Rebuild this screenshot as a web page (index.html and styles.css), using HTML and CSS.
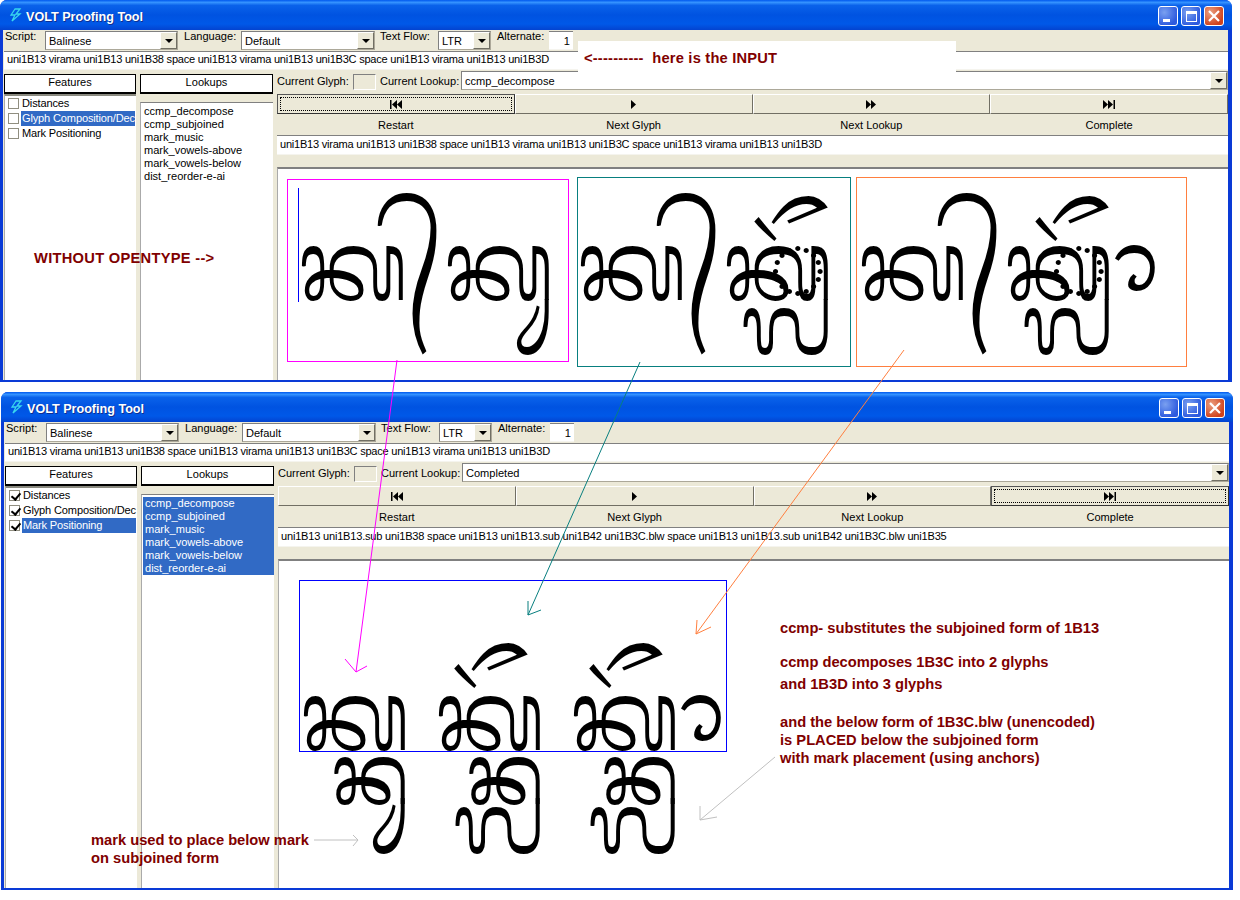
FILE: index.html
```html
<!DOCTYPE html>
<html lang="en">
<head>
<meta charset="utf-8">
<title>VOLT Proofing Tool</title>
<link rel="stylesheet" href="styles.css">
</head>
<body>
<section class="win win-a">
  <header class="title"><svg class="logo" viewBox="0 0 14 15"><path d="M6 1 2 7h4L3 13 11 6H7l4-5z" fill="none" stroke="#39d6ee" stroke-width="1.3"/></svg><span class="title-text">VOLT Proofing Tool</span>
    <div class="caps"><span class="cap"><i class="g-min"></i></span><span class="cap"><i class="g-max"></i></span><span class="cap cap-x"><svg viewBox="0 0 12 12" class="g-x"><path d="M1 1l10 10M11 1 1 11" stroke="#fff" stroke-width="2.2"/></svg></span></div>
  </header>
  <div class="client">
    <div class="bar">
      <label class="lb lb-script">Script:</label><div class="combo c-script"><span>Balinese</span><b class="drop"></b></div>
      <label class="lb lb-lang">Language:</label><div class="combo c-lang"><span>Default</span><b class="drop"></b></div>
      <label class="lb lb-flow">Text Flow:</label><div class="combo c-flow"><span>LTR</span><b class="drop"></b></div>
      <label class="lb lb-alt">Alternate:</label><div class="field f-alt">1</div>
    </div>
    <div class="field f-in">uni1B13 virama uni1B13 uni1B38 space uni1B13 virama uni1B13 uni1B3C space uni1B13 virama uni1B13 uni1B3D</div>
    <div class="main">
      <div class="col col-f">
        <div class="head">Features</div>
        <ul class="list checks">
          <li><i class="chk"></i><span>Distances</span></li>
          <li><i class="chk"></i><span class="sel">Glyph Composition/Dec</span></li>
          <li><i class="chk"></i><span>Mark Positioning</span></li>
        </ul>
      </div>
      <div class="col col-l">
        <div class="head">Lookups</div>
        <ul class="list look">
          <li>ccmp_decompose</li><li>ccmp_subjoined</li><li>mark_music</li><li>mark_vowels-above</li><li>mark_vowels-below</li><li>dist_reorder-e-ai</li>
        </ul>
      </div>
      <div class="col col-r">
        <div class="cur">
          <label class="lb lb-g">Current Glyph:</label><i class="gbox"></i><label class="lb lb-k">Current Lookup:</label><div class="combo c-k"><span>ccmp_decompose</span><b class="drop"></b></div>
        </div>
        <div class="btns">
          <div class="btn focus"><svg class="ico" viewBox="0 0 13 9"><path d="M1 0h1.500v9H1zM8 0v9L3 4.500zM13 0v9L8 4.500z"/></svg></div>
          <div class="btn"><svg class="ico" viewBox="0 0 13 9"><path d="M4 0v9l5-4.500z"/></svg></div>
          <div class="btn"><svg class="ico" viewBox="0 0 13 9"><path d="M1 0v9l5-4.500zM6 0v9l5-4.500z"/></svg></div>
          <div class="btn"><svg class="ico" viewBox="0 0 13 9"><path d="M0 0v9l5-4.500zM5 0v9l5-4.500zM10.500 0H12v9h-1.500z"/></svg></div>
        </div>
        <div class="caps-row"><span>Restart</span><span>Next Glyph</span><span>Next Lookup</span><span>Complete</span></div>
        <div class="field f-out">uni1B13 virama uni1B13 uni1B38 space uni1B13 virama uni1B13 uni1B3C space uni1B13 virama uni1B13 uni1B3D</div>
        <div class="canvas"></div>
      </div>
    </div>
  </div>
</section>

<section class="win win-b">
  <header class="title"><svg class="logo" viewBox="0 0 14 15"><path d="M6 1 2 7h4L3 13 11 6H7l4-5z" fill="none" stroke="#39d6ee" stroke-width="1.3"/></svg><span class="title-text">VOLT Proofing Tool</span>
    <div class="caps"><span class="cap"><i class="g-min"></i></span><span class="cap"><i class="g-max"></i></span><span class="cap cap-x"><svg viewBox="0 0 12 12" class="g-x"><path d="M1 1l10 10M11 1 1 11" stroke="#fff" stroke-width="2.2"/></svg></span></div>
  </header>
  <div class="client">
    <div class="bar">
      <label class="lb lb-script">Script:</label><div class="combo c-script"><span>Balinese</span><b class="drop"></b></div>
      <label class="lb lb-lang">Language:</label><div class="combo c-lang"><span>Default</span><b class="drop"></b></div>
      <label class="lb lb-flow">Text Flow:</label><div class="combo c-flow"><span>LTR</span><b class="drop"></b></div>
      <label class="lb lb-alt">Alternate:</label><div class="field f-alt">1</div>
    </div>
    <div class="field f-in">uni1B13 virama uni1B13 uni1B38 space uni1B13 virama uni1B13 uni1B3C space uni1B13 virama uni1B13 uni1B3D</div>
    <div class="main">
      <div class="col col-f">
        <div class="head">Features</div>
        <ul class="list checks">
          <li><i class="chk on"></i><span>Distances</span></li>
          <li><i class="chk on"></i><span>Glyph Composition/Dec</span></li>
          <li><i class="chk on"></i><span class="sel">Mark Positioning</span></li>
        </ul>
      </div>
      <div class="col col-l">
        <div class="head">Lookups</div>
        <ul class="list look all">
          <li>ccmp_decompose</li><li>ccmp_subjoined</li><li>mark_music</li><li>mark_vowels-above</li><li>mark_vowels-below</li><li>dist_reorder-e-ai</li>
        </ul>
      </div>
      <div class="col col-r">
        <div class="cur">
          <label class="lb lb-g">Current Glyph:</label><i class="gbox"></i><label class="lb lb-k">Current Lookup:</label><div class="combo c-k"><span>Completed</span><b class="drop"></b></div>
        </div>
        <div class="btns">
          <div class="btn"><svg class="ico" viewBox="0 0 13 9"><path d="M1 0h1.500v9H1zM8 0v9L3 4.500zM13 0v9L8 4.500z"/></svg></div>
          <div class="btn"><svg class="ico" viewBox="0 0 13 9"><path d="M4 0v9l5-4.500z"/></svg></div>
          <div class="btn"><svg class="ico" viewBox="0 0 13 9"><path d="M1 0v9l5-4.500zM6 0v9l5-4.500z"/></svg></div>
          <div class="btn focus"><svg class="ico" viewBox="0 0 13 9"><path d="M0 0v9l5-4.500zM5 0v9l5-4.500zM10.500 0H12v9h-1.500z"/></svg></div>
        </div>
        <div class="caps-row"><span>Restart</span><span>Next Glyph</span><span>Next Lookup</span><span>Complete</span></div>
        <div class="field f-out fo-b">uni1B13 uni1B13.sub uni1B38 space uni1B13 uni1B13.sub uni1B42 uni1B3C.blw space uni1B13 uni1B13.sub uni1B42 uni1B3C.blw uni1B35</div>
        <div class="canvas"></div>
      </div>
    </div>
  </div>
</section>

<div class="frame fr-m"></div><div class="frame fr-t"></div><div class="frame fr-o"></div><div class="frame fr-b"></div><i class="caret"></i>

<div class="spec raw s-1">ᬓ᭄ᬓᬸ</div>
<div class="spec raw body-part s-2">ᬓ᭄ᬓᬼ</div>
<div class="spec raw top-part t-2" aria-hidden="true">ᬓ᭄ᬓᬼ</div>
<div class="spec raw body-part s-3">ᬓ᭄ᬓᬽ</div>
<div class="spec raw top-part t-3" aria-hidden="true">ᬓ᭄ᬓᬽ</div>
<div class="spec s-4">ᬓ᭄ᬓᬸ ᬓ᭄ᬓᬼ <span class="w3">ᬓ᭄ᬓᬽ</span></div>

<svg class="arrows" viewBox="0 0 1240 900">
  <path d="M397 360 356 672M345 659 356 672 367 666" stroke="#f0f"/>
  <path d="M640 362 528 615M528 601 528 615 541 610" stroke="#087f7f"/>
  <path d="M904 350 696 634M697 620 696 634 711 627" stroke="#ff7f3f"/>
  <path d="M775 757 700 820M700 806 700 820 717 817" stroke="#c0c0c0"/>
  <path d="M314 840H358M353 835 358 840 353 846" stroke="#c0c0c0"/>
</svg>

<div class="input-note"><span>&lt;----------  here is the INPUT</span></div>
<p class="note n-open">WITHOUT OPENTYPE --&gt;</p>
<div class="note n-side">
  <p class="p1">ccmp- substitutes the subjoined form of 1B13</p>
  <p class="p2">ccmp decomposes 1B3C into 2 glyphs<br>and 1B3D into 3 glyphs</p>
  <p class="p3">and the below form of 1B3C.blw (unencoded)<br>is PLACED below the subjoined form<br>with mark placement (using anchors)</p>
</div>
<p class="note n-mark">mark used to place below mark<br>on subjoined form</p>
</body>
</html>
```

FILE: styles.css
```css
* { box-sizing: border-box; }
html, body { margin: 0; padding: 0; background: #fff; }
body { position: relative; width: 1240px; height: 900px; overflow: hidden; font: 11.05px/13px "Liberation Sans", Arial, sans-serif; color: #000; }
ul, p { margin: 0; padding: 0; list-style: none; }
i, b { display: block; font-style: normal; }

.win { position: absolute; display: flex; flex-direction: column; background: #0831d9; border-radius: 7px 7px 0 0; border: solid #0a3ad6; border-width: 0 4px 2px 3px; }
.win-a { left: 0; top: 0; width: 1232px; height: 382px; }
.win-b { left: 1px; top: 392px; width: 1232px; height: 498px; }

.title { height: 30px; margin: 0 -4px 0 -3px; padding: 4px 8px 0 9px; display: flex; align-items: center; border-radius: 7px 7px 0 0;
  background: linear-gradient(#0058ee 0, #3593ff 8%, #0a62ea 18%, #0053e1 50%, #0058e8 80%, #0343d0 100%); }
.logo { width: 14px; height: 15px; margin: -3px 3px 0 0; }
.title-text { color: #fff; font-weight: 700; font-size: 12.6px; text-shadow: 1px 1px 0 #0f2f90; }
.caps { margin: -2px 0 0 auto; display: flex; gap: 3px; }
.cap { width: 20px; height: 20px; border: 1px solid #fff; border-radius: 3px; background: radial-gradient(circle at 30% 30%, #7aa0f0, #2d5ade 75%); display: flex; align-items: center; justify-content: center; position: relative; }
.cap-x { background: radial-gradient(circle at 30% 30%, #eaa080, #d0421c 75%); }
.g-min { width: 7px; height: 3px; background: #fff; align-self: flex-end; margin: 0 4px 3px 0; }
.g-max { width: 11px; height: 11px; border: 1px solid #fff; border-top-width: 3px; }
.g-x { width: 12px; height: 12px; }

.client { flex: 1; display: flex; flex-direction: column; background: #ece9d8; padding-left: 1px; min-height: 0; }
.bar { height: 21px; display: flex; align-items: flex-start; padding-top: 1px; }
.lb { display: block; line-height: 11px; white-space: nowrap; }
.lb-script { width: 41px; padding-left: 1px; }
.lb-lang { width: 57px; margin-left: 6px; }
.lb-flow { width: 58px; margin-left: 5px; }
.lb-alt { width: 52px; margin-left: 6px; }

.combo { display: flex; align-items: center; height: 19px; background: #fff; border: 1px solid #aca899; border-top-color: #808080; border-left-color: #808080; padding-left: 3px; position: relative; }
.combo span { flex: 1; padding-top: 1px; }
.c-script { width: 133px; } .c-lang { width: 134px; } .c-flow { width: 53px; }
.drop { width: 17px; height: 17px; background: #ece9d8; border: 1px solid; border-color: #fff #716f64 #716f64 #fff; position: relative; }
.drop::after { content: ""; position: absolute; left: 4px; top: 6px; border: 4px solid transparent; border-top: 4px solid #000; border-bottom: 0; }

.field { background: #fff; height: 19px; padding: 1px 0 0 3px; border-top: 1px solid #808080; border-bottom: 1px solid #f5f4ee; white-space: nowrap; overflow: hidden; }
.f-in, .f-out { letter-spacing: -.24px; }
.fo-b { letter-spacing: -.2px; }
.f-alt { width: 24px; text-align: right; padding-right: 3px; padding-top: 3px; }

.main { flex: 1; display: flex; min-height: 0; }
.col { display: flex; flex-direction: column; min-height: 0; }
.col-f { width: 132px; margin-top: 4px; }
.col-l { width: 133px; margin: 4px 0 0 4px; }
.col-r { flex: 1; margin-left: 4px; min-width: 0; }
.head { height: 20px; background: #fff; border: 1px solid #000; border-bottom-width: 2px; text-align: center; line-height: 14px; }
.list { flex: 1; background: #fff; }
.checks { padding: 0 1px 0 3px; border-top: 2px solid #8a8a80; border-left: 1px solid #aaa; letter-spacing: -.15px; }
.checks li { height: 15px; display: flex; align-items: center; gap: 2px; }
.chk { width: 11px; height: 11px; border: 1px solid #908e80; background: #fff; flex: none; position: relative; }
.chk.on::after { content: ""; position: absolute; left: 3px; top: 0; width: 4px; height: 7px; border: solid #000; border-width: 0 2px 2px 0; transform: rotate(40deg); }
.checks span { flex: 1; padding-left: 1px; height: 15px; line-height: 15px; white-space: nowrap; }
.sel { background: #316ac5; color: #fff; }
.look { margin-top: 8px; padding: 2px 0 0 1px; border-top: 1px solid #808080; border-left: 1px solid #aaa; }
.look li { height: 13px; padding-left: 2px; }
.look.all li { background: #316ac5; color: #fff; }

.cur { height: 24px; display: flex; align-items: flex-start; padding-top: 1px; }
.lb-g { padding-top: 5px; width: 76px; }
.gbox { width: 23px; height: 16px; margin-top: 3px; border: 1px solid; border-color: #808080 #fff #fff #808080; }
.lb-k { padding-top: 5px; width: 81px; margin-left: 4px; }
.c-k { flex: 1; }
.btns { display: grid; grid-template-columns: repeat(4, 1fr); height: 20px; }
.btn { display: flex; align-items: center; justify-content: center; border: 1px solid; border-color: #fff #716f64 #716f64 #fff; background: #ece9d8; position: relative; }
.btn.focus { border-color: #555 #333 #333 #555; }
.btn.focus::before { content: ""; position: absolute; inset: 2px; border: 1px dotted #000; }
.ico { width: 13px; height: 9px; }
.caps-row { display: grid; grid-template-columns: repeat(4, 1fr); height: 21px; text-align: center; line-height: 23px; }
.f-out { height: 20px; padding-top: 2px; }
.canvas { flex: 1; margin-top: 12px; background: #fff; border-top: 2px solid #808080; border-left: 1px solid #aaa; }

.frame { position: absolute; border: 1px solid; }
.fr-m { left: 287px; top: 179px; width: 282px; height: 183px; border-color: #f0f; }
.fr-t { left: 577px; top: 177px; width: 274px; height: 190px; border-color: #087f7f; }
.fr-o { left: 856px; top: 177px; width: 331px; height: 190px; border-color: #ff7f3f; }
.fr-b { left: 299px; top: 580px; width: 428px; height: 172px; border-color: #00f; }
.caret { position: absolute; left: 298px; top: 188px; width: 1px; height: 114px; background: #00f; }
.spec { position: absolute; font-family: "Noto Sans", "DejaVu Sans", sans-serif; font-size: 100px; line-height: 140px; white-space: nowrap; word-spacing: -2px; }
.raw { font-feature-settings: "ccmp" 0, "blwf" 0, "pstf" 0, "pref" 0, "abvf" 0, "rphf" 0, "pres" 0, "abvs" 0, "blws" 0, "psts" 0, "haln" 0, "rlig" 0, "calt" 0, "clig" 0, "liga" 0; }
.w3 { font-feature-settings: "psts" 0, "pres" 0, "pstf" 0, "liga" 0, "clig" 0, "rlig" 0, "calt" 0; }
.body-part { clip-path: polygon(-20px -60px, 150px -60px, 150px 33px, 400px 33px, 400px 220px, -20px 220px); }
.top-part { clip-path: polygon(150px -60px, 300px -60px, 300px 33px, 150px 33px); }
.s-1 { left: 298px; top: 191px; }
.s-2 { left: 577px; top: 191px; }
.t-2 { left: 600px; top: 212px; }
.s-3 { left: 858px; top: 191px; }
.t-3 { left: 881px; top: 212px; }
.s-4 { left: 300px; top: 641px; }
.arrows { position: absolute; left: 0; top: 0; width: 1240px; height: 900px; fill: none; pointer-events: none; }

.input-note { position: absolute; left: 578px; top: 41px; width: 378px; height: 31px; background: #fff; padding: 8px 0 0 6px; }
.input-note span, .note { font: 700 14.7px/18px "Liberation Sans", Arial, sans-serif; color: #800000; }
.input-note span { white-space: pre; letter-spacing: .2px; }
.note { position: absolute; white-space: nowrap; }
.n-open { left: 34px; top: 249px; letter-spacing: .27px; }
.n-side { left: 780px; top: 619px; }
.p1 { margin-bottom: 14px; }
.p2 { margin-bottom: 18px; line-height: 22px; }
.n-mark { left: 91px; top: 831px; }
```
